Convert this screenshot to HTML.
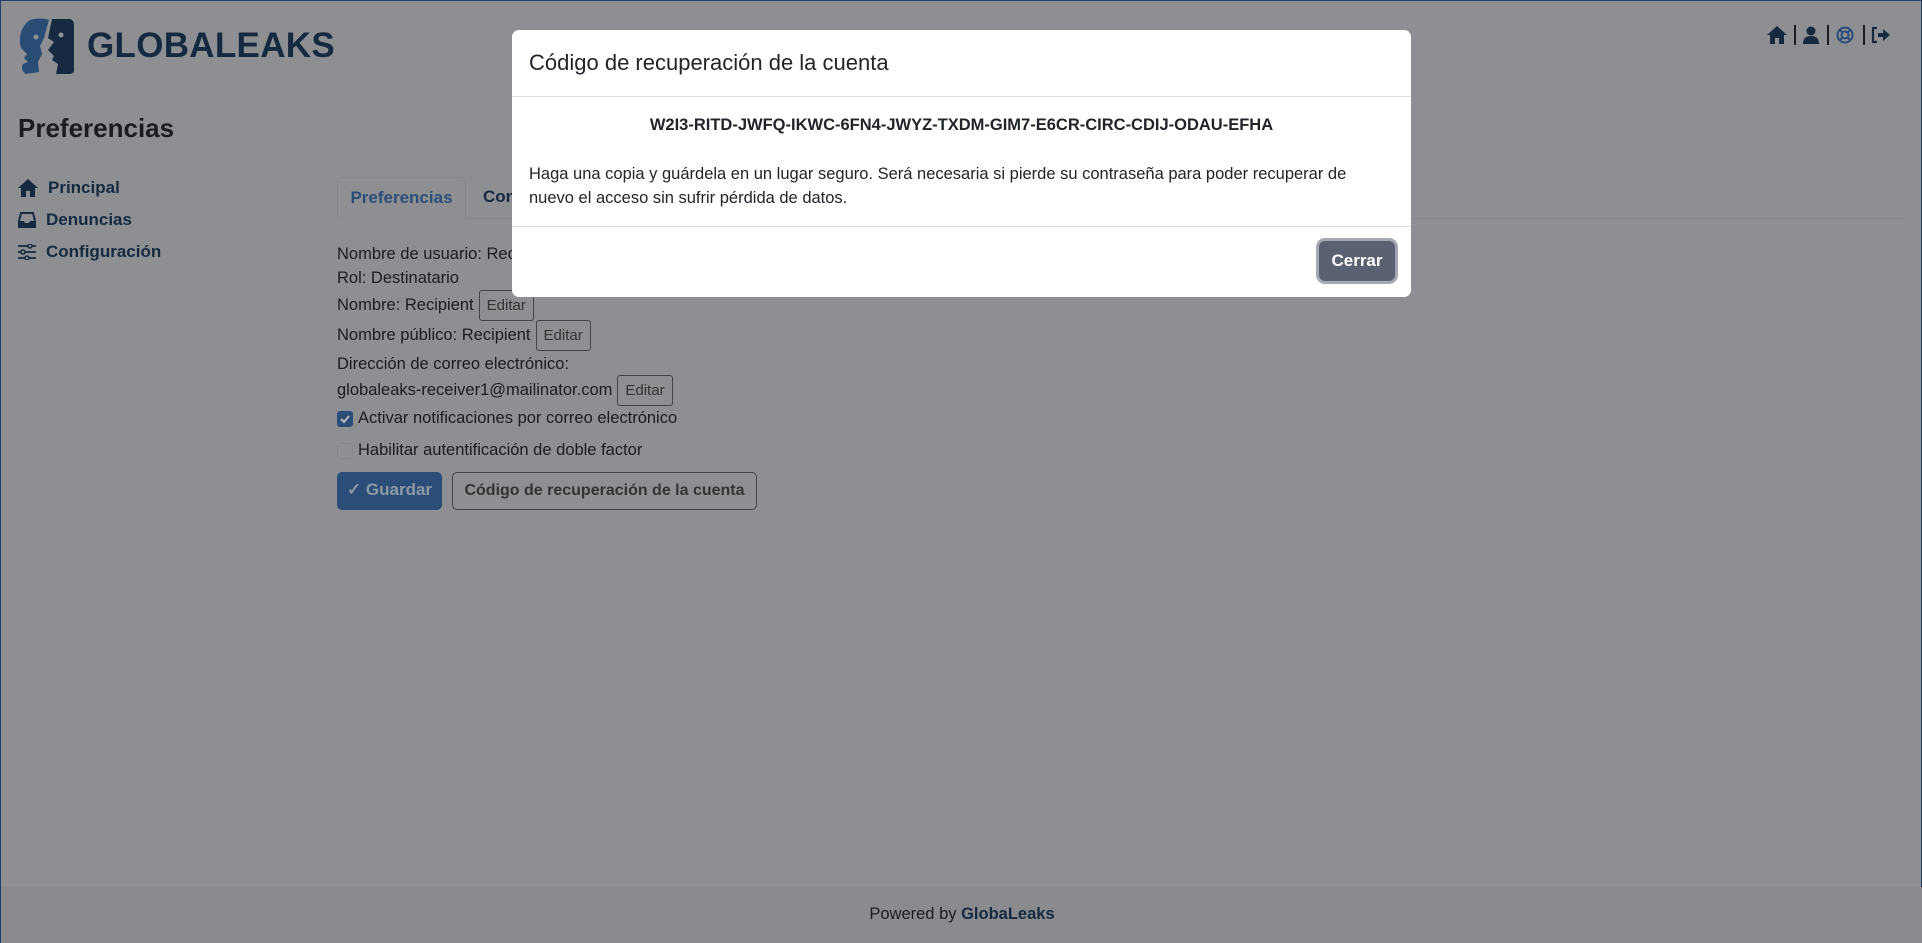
<!DOCTYPE html>
<html><head><meta charset="utf-8"><style>
*{box-sizing:border-box;margin:0;padding:0}
html,body{width:1922px;height:943px;overflow:hidden}
body{background:#8e8f93;font-family:"Liberation Sans",sans-serif;color:#1b1c1f;position:relative;border:1px solid #1e3f66}
.abs{position:absolute}
.logo-t{left:86px;top:25px;font-size:35px;font-weight:bold;color:#152a40;letter-spacing:0.3px}
h1{position:absolute;left:17px;top:112px;font-size:26px;font-weight:bold;color:#1b1c1f}
.nav{left:17px;font-size:17px;color:#152a40;display:flex;align-items:center;font-weight:bold}
.nav svg{margin-right:10px}
.tabline{left:336px;top:217px;width:1568px;height:1px;background:#86878b}
.tab{left:336px;top:176px;width:129px;height:42px;border:1px solid #86878b;border-bottom:none;border-radius:5px 5px 0 0;background:#8e8f93;color:#2a4e78;font-size:17px;text-align:center;line-height:40px;font-weight:bold}
.tab2{left:482px;top:176px;font-size:17px;line-height:40px;color:#152a40;font-weight:bold}
.t{left:336px;font-size:16.5px}
.eb{display:inline-block;border:1px solid #444;border-radius:3px;font-size:15px;padding:6px 7px;color:#333;vertical-align:middle;margin-left:5px}
.btn{top:471px;height:38px;border-radius:5px;font-size:17px;line-height:36px;text-align:center}
.modal{left:511px;top:29px;width:899px;height:267px;background:#fff;border-radius:7px}
.footer{left:0;top:886px;width:1922px;height:57px;background:#8a8b8f;text-align:center;line-height:54px;font-size:16.5px;color:#1b1c1f}
</style></head><body>
<svg class="abs" style="left:17px;top:17px" width="56" height="56" viewBox="0 0 56 56">
<path fill="#284c73" d="M12 2 C18 0 26 0 31 2 L26 20 L22 28 L24 36 L20 44 L21 54 L8 56 C4 54 3 50 5 46 L10 44 L6 40 L9 36 L3 30 C0 20 3 8 12 2Z"/>
<circle cx="18" cy="19" r="2.5" fill="#8e8f93"/>
<path fill="#152a40" d="M34 1 L52 1 C55 2 56 4 56 8 L56 52 C56 55 54 56 51 56 L38 56 L40 46 L34 42 L36 38 L30 32 L36 24 L30 20 Z"/>
<circle cx="43" cy="17" r="2.5" fill="#8e8f93"/>
</svg>
<div class="abs logo-t">GLOBALEAKS</div>
<svg class="abs" style="left:1766px;top:25px" width="20" height="18" viewBox="0 0 20 18"><path fill="#152a40" d="M10 0 L20 9 L17 9 L17 18 L12 18 L12 12 L8 12 L8 18 L3 18 L3 9 L0 9Z"/></svg>
<div class="abs" style="left:1793px;top:24px;width:2px;height:20px;background:#1b1c1f"></div>
<svg class="abs" style="left:1802px;top:25px" width="16" height="18" viewBox="0 0 16 18"><circle cx="8" cy="5" r="4.5" fill="#152a40"/><path fill="#152a40" d="M0 18 C0 12 3 10 8 10 C13 10 16 12 16 18Z"/></svg>
<div class="abs" style="left:1826px;top:24px;width:2px;height:20px;background:#1b1c1f"></div>
<svg class="abs" style="left:1835px;top:25px" width="18" height="18" viewBox="0 0 18 18"><circle cx="9" cy="9" r="7.5" fill="none" stroke="#2a4e78" stroke-width="2"/><circle cx="9" cy="9" r="3.5" fill="none" stroke="#2a4e78" stroke-width="2"/><path stroke="#2a4e78" stroke-width="2" d="M4 4L6.5 6.5M14 4L11.5 6.5M4 14L6.5 11.5M14 14L11.5 11.5"/></svg>
<div class="abs" style="left:1862px;top:24px;width:2px;height:20px;background:#1b1c1f"></div>
<svg class="abs" style="left:1870px;top:25px" width="20" height="18" viewBox="0 0 20 18"><path fill="none" stroke="#152a40" stroke-width="2.2" d="M6 2 L2 2 L2 16 L6 16"/><path fill="#152a40" d="M7 7 L12 7 L12 3 L19 9 L12 15 L12 11 L7 11Z"/></svg>
<h1>Preferencias</h1>
<div class="abs nav" style="top:177px"><svg width="20" height="18" viewBox="0 0 20 18"><path fill="#152a40" d="M10 0 L20 9 L17 9 L17 18 L12 18 L12 12 L8 12 L8 18 L3 18 L3 9 L0 9Z"/></svg>Principal</div>
<div class="abs nav" style="top:209px"><svg width="18" height="16" viewBox="0 0 18 16"><path fill="none" stroke="#152a40" stroke-width="2" d="M3 1 L15 1 L17 9 L17 15 L1 15 L1 9Z"/><path fill="#152a40" d="M1 9 L6 9 L7 11 L11 11 L12 9 L17 9 L17 15 L1 15Z"/></svg>Denuncias</div>
<div class="abs nav" style="top:241px"><svg width="18" height="16" viewBox="0 0 18 16"><path stroke="#152a40" stroke-width="1.8" d="M0 2H18M0 8H18M0 14H18"/><circle cx="12" cy="2" r="2" fill="#8e8f93" stroke="#152a40" stroke-width="1.5"/><circle cx="5" cy="8" r="2" fill="#8e8f93" stroke="#152a40" stroke-width="1.5"/><circle cx="9" cy="14" r="2" fill="#8e8f93" stroke="#152a40" stroke-width="1.5"/></svg>Configuración</div>
<div class="abs tabline"></div>
<div class="abs tab">Preferencias</div>
<div class="abs tab2">Contraseña</div>
<div class="abs t" style="top:244px">Nombre de usuario: Recipient</div>
<div class="abs t" style="top:268px">Rol: Destinatario</div>
<div class="abs t" style="top:289px">Nombre: Recipient<span class="eb">Editar</span></div>
<div class="abs t" style="top:319px">Nombre público: Recipient<span class="eb">Editar</span></div>
<div class="abs t" style="top:354px">Dirección de correo electrónico:</div>
<div class="abs t" style="top:374px">globaleaks-receiver1@mailinator.com<span class="eb">Editar</span></div>
<div class="abs t" style="top:408px;display:flex;align-items:center"><span style="width:16px;height:16px;background:#2a4e78;border-radius:3px;margin-right:5px;display:inline-block;position:relative"><svg width="16" height="16" viewBox="0 0 16 16" style="position:absolute;left:0;top:0"><path d="M4 8 L7 11 L12 5" fill="none" stroke="#bbb" stroke-width="2"/></svg></span>Activar notificaciones por correo electrónico</div>
<div class="abs t" style="top:440px;display:flex;align-items:center"><span style="width:16px;height:16px;border:1px solid #85868a;border-radius:3px;margin-right:5px;display:inline-block"></span>Habilitar autentificación de doble factor</div>
<div class="abs btn" style="left:336px;width:105px;background:#2a4e78;color:#8e99a8;font-weight:bold">✓ Guardar</div>
<div class="abs btn" style="left:451px;width:305px;border:1px solid #444;color:#333;font-weight:bold;font-size:16px">Código de recuperación de la cuenta</div>
<div class="abs footer">Powered by <b style="color:#152a40">GlobaLeaks</b></div>
<div class="abs modal">
<div class="abs" style="left:17px;top:20px;font-size:22px;color:#212529">Código de recuperación de la cuenta</div>
<div class="abs" style="left:0;top:66px;width:899px;height:1px;background:#dee2e6"></div>
<div class="abs" style="left:0;top:86px;width:899px;text-align:center;font-size:16.5px;font-weight:bold;color:#212529">W2I3-RITD-JWFQ-IKWC-6FN4-JWYZ-TXDM-GIM7-E6CR-CIRC-CDIJ-ODAU-EFHA</div>
<div class="abs" style="left:17px;top:132px;width:835px;font-size:16.5px;line-height:24px;color:#212529">Haga una copia y guárdela en un lugar seguro. Será necesaria si pierde su contraseña para poder recuperar de nuevo el acceso sin sufrir pérdida de datos.</div>
<div class="abs" style="left:0;top:196px;width:899px;height:1px;background:#dee2e6"></div>
<div class="abs" style="left:807px;top:211px;width:76px;height:40px;border-radius:6px;background:#5a6170;box-shadow:0 0 0 3px #a3a8b2;color:#fff;font-size:17px;text-align:center;line-height:40px;font-weight:bold">Cerrar</div>
</div>
</body></html>
